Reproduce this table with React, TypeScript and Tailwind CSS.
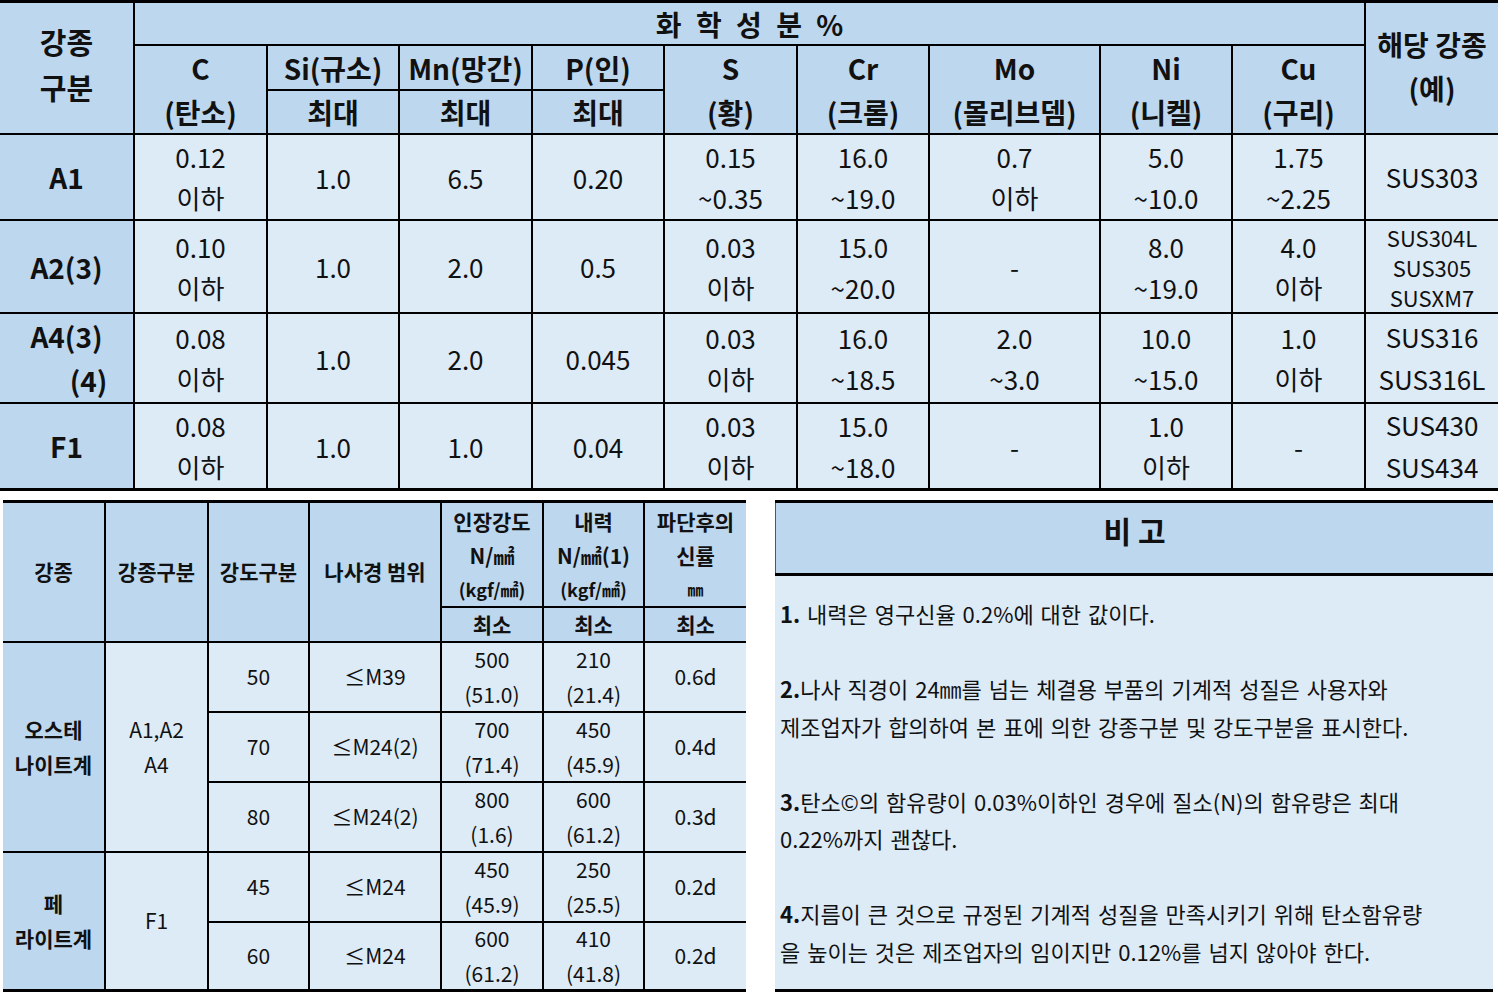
import type { ReactNode } from 'react';

const HEAD = 'bg-[#bdd7ee]';
const BODY = 'bg-[#ddebf7]';

function Cell({ className = '', children }: { className?: string; children?: ReactNode }) {
  return (
    <div className={`flex flex-col items-center justify-center text-center ${className}`}>
      {children}
    </div>
  );
}

type Row = { name: ReactNode; vals: string[][]; sus: string[]; susSmall?: boolean };

const chemRows: Row[] = [
  {
    name: 'A1',
    vals: [['0.12', '이하'], ['1.0'], ['6.5'], ['0.20'], ['0.15', '~0.35'], ['16.0', '~19.0'], ['0.7', '이하'], ['5.0', '~10.0'], ['1.75', '~2.25']],
    sus: ['SUS303'],
  },
  {
    name: 'A2(3)',
    vals: [['0.10', '이하'], ['1.0'], ['2.0'], ['0.5'], ['0.03', '이하'], ['15.0', '~20.0'], ['-'], ['8.0', '~19.0'], ['4.0', '이하']],
    sus: ['SUS304L', 'SUS305', 'SUSXM7'],
    susSmall: true,
  },
  {
    name: (
      <>
        <span>A4(3)</span>
        <span className="ml-[44px]">(4)</span>
      </>
    ),
    vals: [['0.08', '이하'], ['1.0'], ['2.0'], ['0.045'], ['0.03', '이하'], ['16.0', '~18.5'], ['2.0', '~3.0'], ['10.0', '~15.0'], ['1.0', '이하']],
    sus: ['SUS316', 'SUS316L'],
  },
  {
    name: 'F1',
    vals: [['0.08', '이하'], ['1.0'], ['1.0'], ['0.04'], ['0.03', '이하'], ['15.0', '~18.0'], ['-'], ['1.0', '이하'], ['-']],
    sus: ['SUS430', 'SUS434'],
  },
];

const elements = [
  ['C', '(탄소)'],
  ['Si(규소)'],
  ['Mn(망간)'],
  ['P(인)'],
  ['S', '(황)'],
  ['Cr', '(크롬)'],
  ['Mo', '(몰리브뎀)'],
  ['Ni', '(니켈)'],
  ['Cu', '(구리)'],
];

function ChemTable() {
  return (
    <div className="grid grid-cols-[133px_131px_130px_131px_130px_131px_130px_169px_130px_131px_132px] grid-rows-[41px_43px_42px_84px_91px_88px_84px] gap-[2px] bg-black py-[3px] text-[#111]">
      <Cell className={`${HEAD} row-span-3 pb-[8px] text-[29px] font-bold leading-[46px]`}>
        <span>강종</span>
        <span>구분</span>
      </Cell>
      <Cell className={`${HEAD} col-span-9 text-[28px] font-bold [word-spacing:8px]`}>화 학 성 분 %</Cell>
      <Cell className={`${HEAD} row-span-3 pb-[4px] text-[28px] font-bold leading-[44px]`}>
        <span>해당 강종</span>
        <span>(예)</span>
      </Cell>
      {elements.map((e) => (
        <Cell
          key={e[0]}
          className={`${HEAD} text-[28px] font-bold leading-[44px] ${e.length > 1 ? 'row-span-2' : ''}`}
        >
          {e.map((t) => (
            <span key={t} className="whitespace-nowrap">{t}</span>
          ))}
        </Cell>
      ))}
      {[0, 1, 2].map((i) => (
        <Cell key={i} className={`${HEAD} text-[28px] font-bold`}>최대</Cell>
      ))}
      {chemRows.map((r, ri) => (
        <div key={ri} className="contents">
          <Cell className={`${HEAD} text-[28px] font-bold leading-[44px]`}>{r.name}</Cell>
          {r.vals.map((v, vi) => (
            <Cell key={vi} className={`${BODY} text-[26px] leading-[41px]`}>
              {v.map((t, ti) => (
                <span key={ti}>{t}</span>
              ))}
            </Cell>
          ))}
          <Cell className={`${BODY} ${r.susSmall ? 'text-[22px] leading-[30px]' : 'text-[26px] leading-[42px]'}`}>
            {r.sus.map((t) => (
              <span key={t}>{t}</span>
            ))}
          </Cell>
        </div>
      ))}
    </div>
  );
}

const strengthRows = [
  { cls: '50', thread: '≤M39', ts: ['500', '(51.0)'], ys: ['210', '(21.4)'], el: '0.6d' },
  { cls: '70', thread: '≤M24(2)', ts: ['700', '(71.4)'], ys: ['450', '(45.9)'], el: '0.4d' },
  { cls: '80', thread: '≤M24(2)', ts: ['800', '(1.6)'], ys: ['600', '(61.2)'], el: '0.3d' },
  { cls: '45', thread: '≤M24', ts: ['450', '(45.9)'], ys: ['250', '(25.5)'], el: '0.2d' },
  { cls: '60', thread: '≤M24', ts: ['600', '(61.2)'], ys: ['410', '(41.8)'], el: '0.2d' },
];

function StrengthRow({ r }: { r: (typeof strengthRows)[number] }) {
  return (
    <>
      <Cell className={`${BODY} text-[21px]`}>{r.cls}</Cell>
      <Cell className={`${BODY} text-[21px]`}>{r.thread}</Cell>
      <Cell className={`${BODY} text-[21px] leading-[35px]`}>
        <span>{r.ts[0]}</span>
        <span>{r.ts[1]}</span>
      </Cell>
      <Cell className={`${BODY} text-[21px] leading-[35px]`}>
        <span>{r.ys[0]}</span>
        <span>{r.ys[1]}</span>
      </Cell>
      <Cell className={`${BODY} text-[21px]`}>{r.el}</Cell>
    </>
  );
}

function StrengthTable() {
  return (
    <div className="ml-[3px] grid w-[743px] grid-cols-[101px_101px_99px_130px_100px_99px_101px] grid-rows-[103px_33px_68px_68px_68px_68px_66px] gap-[2px] bg-black py-[3px] text-[#111]">
      <Cell className={`${HEAD} row-span-2 text-[21px] font-bold`}>강종</Cell>
      <Cell className={`${HEAD} row-span-2 text-[21px] font-bold`}>강종구분</Cell>
      <Cell className={`${HEAD} row-span-2 text-[21px] font-bold`}>강도구분</Cell>
      <Cell className={`${HEAD} row-span-2 text-[21px] font-bold`}>나사경 범위</Cell>
      <Cell className={`${HEAD} text-[21px] font-bold leading-[34px]`}>
        <span>인장강도</span>
        <span>N/㎟</span>
        <span className="text-[18px]">(kgf/㎟)</span>
      </Cell>
      <Cell className={`${HEAD} text-[21px] font-bold leading-[34px]`}>
        <span>내력</span>
        <span>N/㎟(1)</span>
        <span className="text-[18px]">(kgf/㎟)</span>
      </Cell>
      <Cell className={`${HEAD} text-[21px] font-bold leading-[34px]`}>
        <span>파단후의</span>
        <span>신률</span>
        <span className="text-[16px]">㎜</span>
      </Cell>
      <Cell className={`${HEAD} text-[21px] font-bold`}>최소</Cell>
      <Cell className={`${HEAD} text-[21px] font-bold`}>최소</Cell>
      <Cell className={`${HEAD} text-[21px] font-bold`}>최소</Cell>

      <Cell className={`${HEAD} row-span-3 text-[21px] font-bold leading-[35px]`}>
        <span>오스테</span>
        <span>나이트계</span>
      </Cell>
      <Cell className={`${BODY} row-span-3 text-[21px] leading-[35px]`}>
        <span>A1,A2</span>
        <span>A4</span>
      </Cell>
      <StrengthRow r={strengthRows[0]} />
      <StrengthRow r={strengthRows[1]} />
      <StrengthRow r={strengthRows[2]} />

      <Cell className={`${HEAD} row-span-2 text-[21px] font-bold leading-[35px]`}>
        <span>페</span>
        <span>라이트계</span>
      </Cell>
      <Cell className={`${BODY} row-span-2 text-[21px]`}>F1</Cell>
      <StrengthRow r={strengthRows[3]} />
      <StrengthRow r={strengthRows[4]} />
    </div>
  );
}

function Notes() {
  return (
    <div className="ml-[29px] flex w-[718px] flex-col border-y-[3px] border-black text-[#111]">
      <div className={`${HEAD} flex h-[70px] items-center justify-center border-l border-[#555] pb-[16px] text-[30px] font-bold`}>
        비 고
      </div>
      <div className={`${BODY} flex-1 border-t-[3px] border-black pl-[5px] pt-[19px] text-[22px] leading-[37.5px] [word-spacing:2px]`}>
        <p><b>1.</b> 내력은 영구신율 0.2%에 대한 값이다.</p>
        <p>&nbsp;</p>
        <p><b>2.</b>나사 직경이 24㎜를 넘는 체결용 부품의 기계적 성질은 사용자와</p>
        <p>제조업자가 합의하여 본 표에 의한 강종구분 및 강도구분을 표시한다.</p>
        <p>&nbsp;</p>
        <p><b>3.</b>탄소©의 함유량이 0.03%이하인 경우에 질소(N)의 함유량은 최대</p>
        <p>0.22%까지 괜찮다.</p>
        <p>&nbsp;</p>
        <p><b>4.</b>지름이 큰 것으로 규정된 기계적 성질을 만족시키기 위해 탄소함유량</p>
        <p>을 높이는 것은 제조업자의 임이지만 0.12%를 넘지 않아야 한다.</p>
      </div>
    </div>
  );
}

export default function App() {
  return (
    <div className="h-[994px] w-[1498px] overflow-hidden bg-white font-['Noto_Sans_CJK_KR','Noto_Sans',sans-serif]">
      <ChemTable />
      <div className="mt-[9px] flex items-stretch">
        <StrengthTable />
        <Notes />
      </div>
    </div>
  );
}
